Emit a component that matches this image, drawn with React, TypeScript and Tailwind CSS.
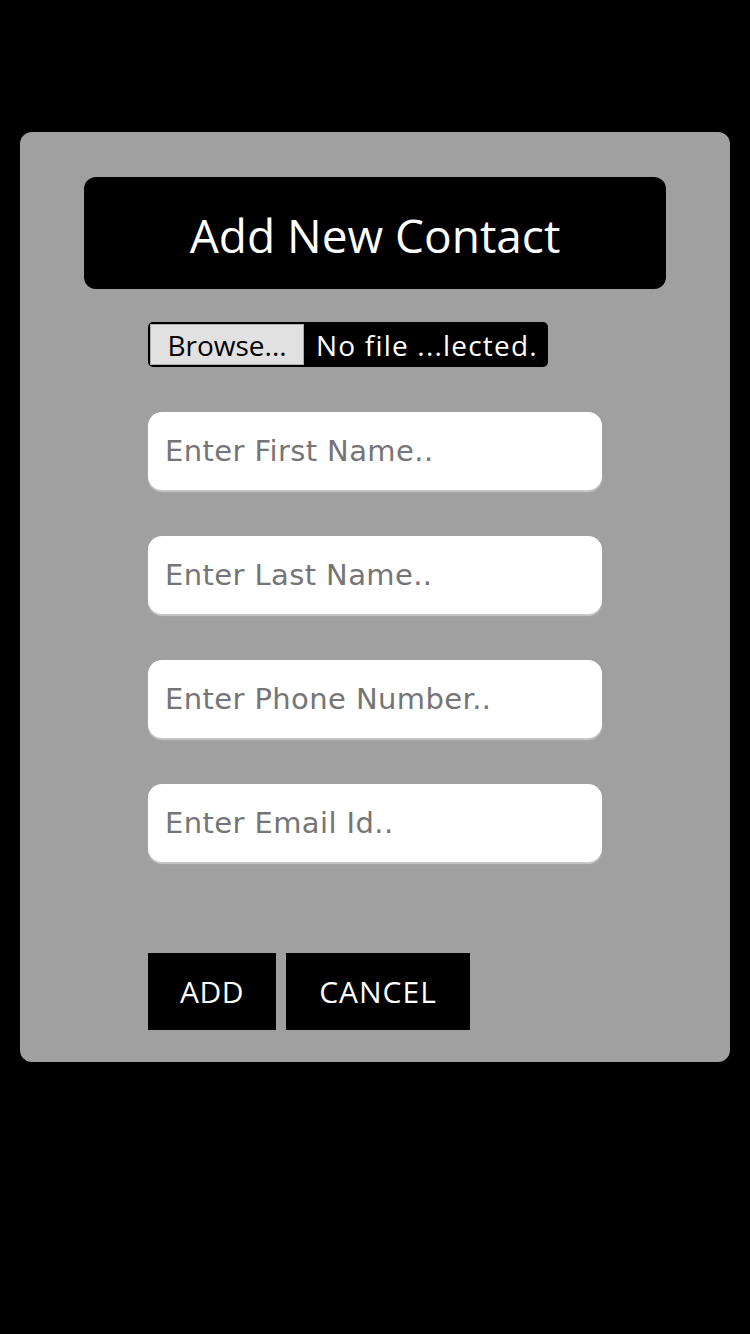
import React from "react";

const inputCls =
  "block w-[454px] h-[78px] rounded-[14px] bg-white px-[17px] text-[29px] tracking-[0.4px] text-black placeholder:text-[#757575] outline-none shadow-[0_2px_1px_#c8c8c8] border-0 font-['DejaVu_Sans',Verdana,sans-serif]";

export default function App() {
  return (
    <div className="min-h-[1334px] bg-black pt-[132px] px-[20px]">
      <div className="h-[930px] rounded-[12px] bg-[#a0a0a0] pt-[45px]">
        <div className="mx-[64px] h-[112px] rounded-[12px] bg-black flex items-center justify-center">
          <span className="text-white text-[46px] leading-none font-['Open_Sans','Noto_Sans',sans-serif] mt-[4px]">
            Add New Contact
          </span>
        </div>
        <div className="pl-[128px]">
          <div className="mt-[33px] w-[400px] h-[45px] bg-black rounded-[5px] flex items-center pl-[2px] font-['Open_Sans','Noto_Sans',sans-serif]">
            <div className="w-[154px] h-[41px] bg-[#e1e1e1] border border-[#adadad] flex items-center justify-center text-[28px] text-black leading-none">
              Browse...
            </div>
            <span className="ml-[12px] text-white text-[28px] leading-none tracking-[1.2px]">No file ...lected.</span>
          </div>
          <div className="mt-[45px] flex flex-col gap-[46px]">
            <input className={inputCls} placeholder="Enter First Name.." />
            <input className={inputCls} placeholder="Enter Last Name.." />
            <input className={inputCls} placeholder="Enter Phone Number.." />
            <input className={inputCls} placeholder="Enter Email Id.." />
          </div>
          <div className="mt-[91px] flex gap-[10px] font-['Open_Sans','Noto_Sans',sans-serif]">
            <button className="w-[128px] h-[77px] bg-black text-white text-[30px] leading-none tracking-[0.5px]">ADD</button>
            <button className="w-[184px] h-[77px] bg-black text-white text-[30px] leading-none tracking-[1px]">CANCEL</button>
          </div>
        </div>
      </div>
    </div>
  );
}
